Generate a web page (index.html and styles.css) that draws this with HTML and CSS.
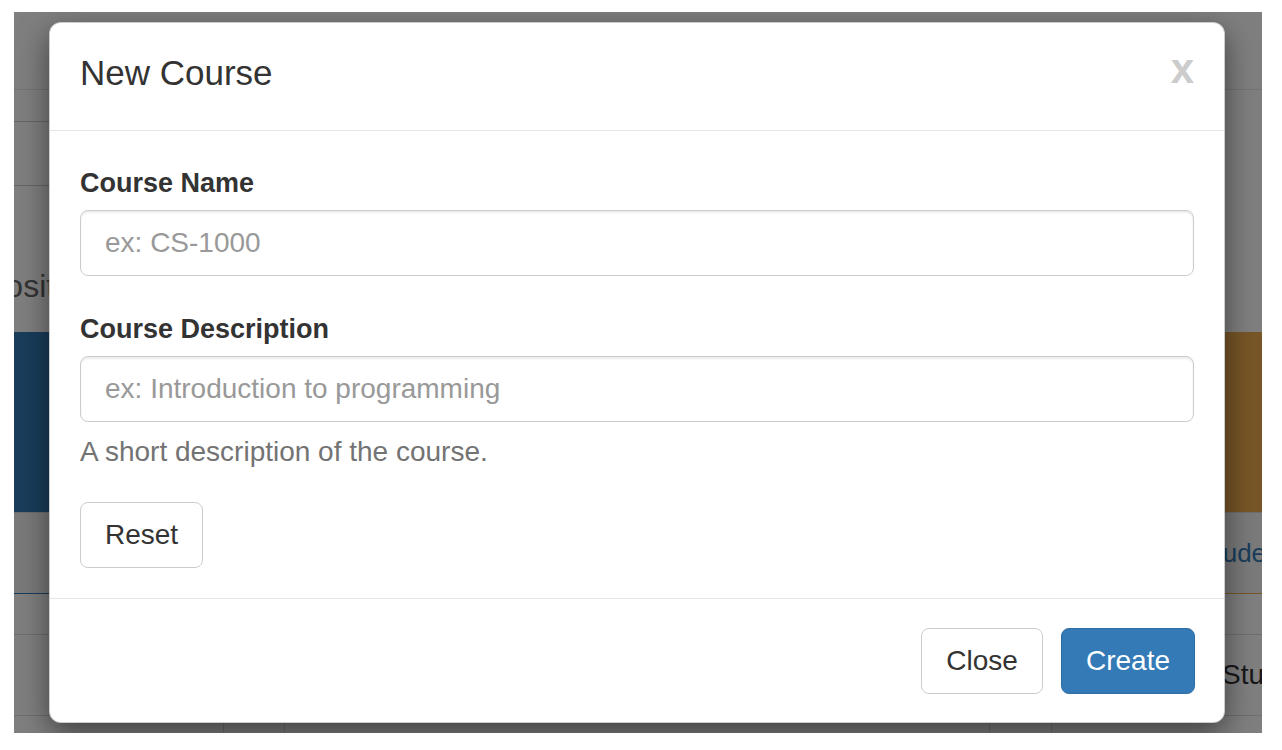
FILE: index.html
```html
<!DOCTYPE html>
<html lang="en">
<head>
<meta charset="utf-8">
<title>New Course</title>
<link rel="stylesheet" href="styles.css">
</head>
<body>
<div class="screen">
  <div class="page">
    <div class="navbar"></div>
    <div class="subnav">
      <div class="crumb crumb-one"></div>
      <div class="crumb crumb-two"></div>
    </div>
    <h1 class="page-title">Positions</h1>
    <div class="panels">
      <div class="panel panel-primary">
        <div class="panel-heading"></div>
        <div class="panel-footer"></div>
      </div>
      <div class="panel panel-warning">
        <div class="panel-heading"></div>
        <div class="panel-footer"><a class="panel-link">View Students</a></div>
      </div>
    </div>
    <div class="data-table">
      <div class="table-row table-row-first">
        <div class="cell"></div>
        <div class="cell"></div>
        <div class="cell"></div>
        <div class="cell"></div>
        <div class="cell cell-text">Students</div>
      </div>
      <div class="table-row table-row-bordered">
        <div class="cell"></div>
        <div class="cell"></div>
        <div class="cell"></div>
        <div class="cell"></div>
        <div class="cell"></div>
      </div>
    </div>
  </div>
  <div class="backdrop"></div>
  <div class="modal">
    <div class="modal-header">
      <h4 class="modal-title">New Course</h4>
      <button class="close" type="button">x</button>
    </div>
    <div class="modal-body">
      <div class="form-group">
        <label class="form-label">Course Name</label>
        <input class="form-control" type="text" placeholder="ex: CS-1000">
      </div>
      <div class="form-group">
        <label class="form-label">Course Description</label>
        <input class="form-control" type="text" placeholder="ex: Introduction to programming">
        <p class="help-block">A short description of the course.</p>
      </div>
      <button class="btn" type="button">Reset</button>
    </div>
    <div class="modal-footer">
      <button class="btn" type="button">Close</button>
      <button class="btn btn-primary" type="button">Create</button>
    </div>
  </div>
</div>
</body>
</html>
```
FILE: styles.css
```css
* {
  box-sizing: border-box;
}

html, body {
  margin: 0;
  padding: 0;
  background: #ffffff;
}

body {
  font-family: "Liberation Sans", Arial, sans-serif;
  color: #333333;
}

.screen {
  position: relative;
  margin: 12px 0 0 14px;
  width: 1248px;
  height: 721px;
  overflow: hidden;
  background: #ffffff;
}

/* ---------- page behind the dialog ---------- */
.page {
  width: 1248px;
}

.navbar {
  height: 78px;
  border-bottom: 1px solid #e7e7e7;
}

.subnav {
  width: 420px;
}

.crumb {
  border-bottom: 1px solid #cccccc;
}

.crumb-one {
  height: 32px;
}

.crumb-two {
  height: 64px;
}

.page-title {
  margin: 80px 0 0 -30px;
  font-size: 32px;
  line-height: 40px;
  font-weight: normal;
  color: #666666;
  white-space: nowrap;
}

.panels {
  display: flex;
  justify-content: space-between;
  margin: 26px -252px 0 -20px;
}

.panel {
  border: 1px solid;
}

.panel-primary {
  width: 520px;
  border-color: #337ab7;
}

.panel-warning {
  width: 400px;
  border-color: #f0ad4e;
}

.panel-heading {
  height: 179px;
}

.panel-primary .panel-heading {
  background: #337ab7;
}

.panel-warning .panel-heading {
  background: #f0ad4e;
}

.panel-footer {
  height: 81px;
  padding: 0 20px;
  display: flex;
  align-items: center;
  background: #f5f5f5;
  border-top: 1px solid #dddddd;
}

.panel-link {
  font-size: 26px;
  color: #337ab7;
  white-space: nowrap;
}

.data-table {
  margin-top: 40px;
}

.table-row {
  display: grid;
  grid-template-columns: 209px 61px 705px 62px 211px;
  border-top: 1px solid #dddddd;
}

.table-row-first {
  height: 81px;
}

.table-row-bordered {
  height: 60px;
}

.table-row-bordered .cell + .cell {
  border-left: 1px solid #dddddd;
}

.cell-text {
  display: flex;
  align-items: center;
  padding-left: 171px;
  font-size: 28px;
  white-space: nowrap;
}

.backdrop {
  position: absolute;
  inset: 0;
  background: rgba(0, 0, 0, 0.5);
}

/* ---------- dialog ---------- */
.modal {
  position: absolute;
  left: 35px;
  top: 10px;
  width: 1176px;
  background: #ffffff;
  border: 1px solid rgba(0, 0, 0, 0.2);
  border-radius: 12px;
  box-shadow: 0 10px 30px rgba(0, 0, 0, 0.5);
}

.modal-header {
  display: flex;
  justify-content: space-between;
  align-items: flex-start;
  padding: 25px 30px 32px;
  border-bottom: 1px solid #e5e5e5;
}

.modal-title {
  margin: 0;
  font-size: 35px;
  line-height: 50px;
  font-weight: normal;
  color: #333333;
}

.close {
  margin: 0;
  padding: 0;
  border: 0;
  background: none;
  font-family: "Liberation Sans", Arial, sans-serif;
  font-size: 42px;
  line-height: 1;
  font-weight: bold;
  color: #cccccc;
}

.modal-body {
  padding: 29px 30px 30px;
}

.form-group {
  margin-bottom: 30px;
}

.form-label {
  display: block;
  padding-top: 3px;
  margin-bottom: 7px;
  font-size: 27px;
  line-height: 40px;
  font-weight: bold;
  color: #333333;
}

.form-control {
  display: block;
  width: 100%;
  height: 66px;
  margin: 0;
  padding: 0 24px;
  font-family: "Liberation Sans", Arial, sans-serif;
  font-size: 28px;
  color: #555555;
  background: #ffffff;
  border: 1px solid #cccccc;
  border-radius: 8px;
  box-shadow: inset 0 2px 2px rgba(0, 0, 0, 0.075);
}

.form-control::placeholder {
  color: #999999;
  opacity: 1;
}

.help-block {
  margin: 10px 0 20px;
  font-size: 28px;
  line-height: 40px;
  color: #737373;
}

.btn {
  display: inline-block;
  height: 66px;
  margin: 0;
  padding: 0 24px;
  font-family: "Liberation Sans", Arial, sans-serif;
  font-size: 28px;
  line-height: 1;
  color: #333333;
  background: #ffffff;
  border: 1px solid #cccccc;
  border-radius: 8px;
}

.btn-primary {
  color: #ffffff;
  background: #337ab7;
  border-color: #2e6da4;
}

.modal-footer {
  display: flex;
  justify-content: flex-end;
  gap: 18px;
  padding: 29px 29px 28px 30px;
  border-top: 1px solid #e5e5e5;
}
```
